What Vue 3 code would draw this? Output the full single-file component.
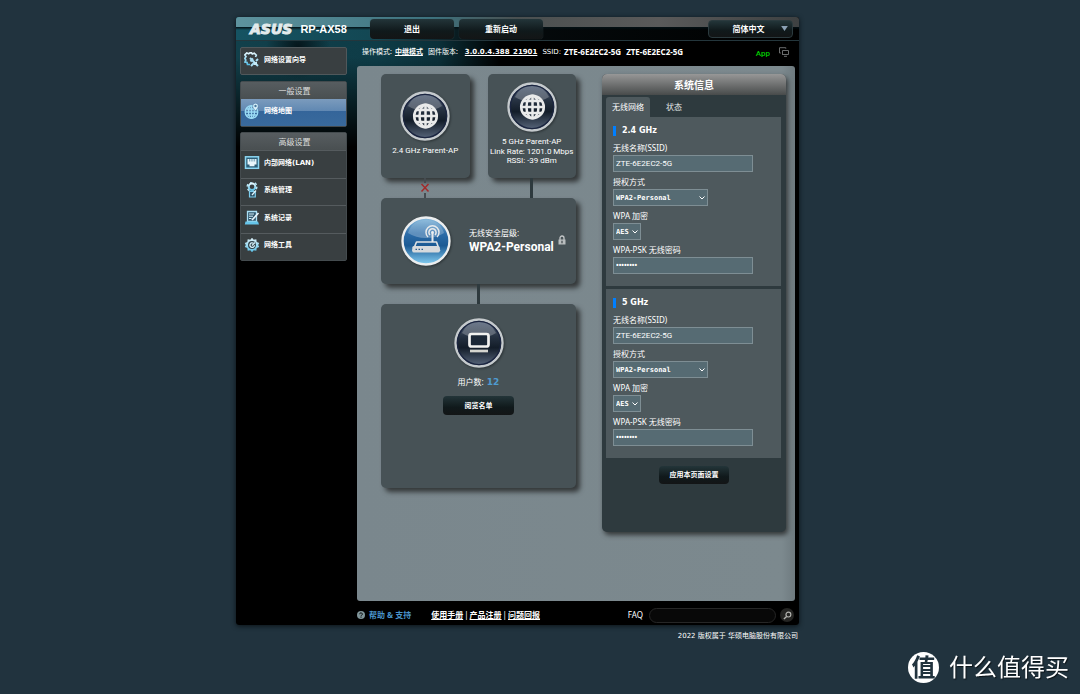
<script setup>
import { ref } from 'vue'

const language = ref('简体中文')
const search = ref('')
const advanced = [
  { label: '内部网络(LAN)', icon: 'i-lan' },
  { label: '系统管理', icon: 'i-admin' },
  { label: '系统记录', icon: 'i-log' },
  { label: '网络工具', icon: 'i-tool' },
]
const bands = ref([
  { id: 'b24', name: '2.4 GHz', ssid: 'ZTE-6E2EC2-5G', auth: 'WPA2-Personal', enc: 'AES', key: '12345678' },
  { id: 'b5', name: '5 GHz', ssid: 'ZTE-6E2EC2-5G', auth: 'WPA2-Personal', enc: 'AES', key: '12345678' },
])
</script>

<template>
  <svg class="defs" width="0" height="0" aria-hidden="true">
    <defs>
      <linearGradient id="g-dark" x1="0" y1="0" x2="0" y2="1">
        <stop offset="0" stop-color="#66748a" /><stop offset=".35" stop-color="#273343" />
        <stop offset=".6" stop-color="#131d29" /><stop offset="1" stop-color="#5c6a80" />
      </linearGradient>
      <linearGradient id="g-blue" x1="0" y1="0" x2="0" y2="1">
        <stop offset="0" stop-color="#8fc0e0" /><stop offset=".35" stop-color="#2c6ca8" />
        <stop offset=".6" stop-color="#1b5a94" /><stop offset="1" stop-color="#86d0f4" />
      </linearGradient>
      <linearGradient id="g-icon" x1="0" y1="0" x2="0" y2="1">
        <stop offset="0" stop-color="#e2f5fc" /><stop offset="1" stop-color="#59bfe6" />
      </linearGradient>
      <linearGradient id="g-gloss" x1="0" y1="0" x2="0" y2="1">
        <stop offset="0" stop-color="#fff" stop-opacity=".1" /><stop offset="1" stop-color="#fff" stop-opacity=".28" />
      </linearGradient>
      <symbol id="ring-dark" viewBox="0 0 50 50">
        <circle cx="25" cy="25" r="23.5" fill="url(#g-dark)" stroke="#c5cacd" stroke-width="2.4" />
        <circle cx="25" cy="25" r="21.6" fill="none" stroke="#1b2540" stroke-width="1.2" />
        <path d="M8 15Q13 4 25 4T42 15Q34 20 25 20T8 15Z" fill="url(#g-gloss)" />
      </symbol>
      <symbol id="globe" viewBox="0 0 50 50">
        <use href="#ring-dark" />
        <g fill="none" stroke="#e9eaea" stroke-width="2.5">
          <circle cx="25.5" cy="25" r="11.3" /><ellipse cx="25.5" cy="25" rx="6" ry="11.3" />
          <path d="M25.5 13.500v23M14 25h23M16 19h19M16 31h19" />
        </g>
      </symbol>
      <symbol id="i-wizard" viewBox="0 0 16 16">
        <path d="M6 12.500H3.500L3 10.500 1 10l.8-2L.8 6.500 2 4.500.8 3l2-2 1.900.8L6 .8h1.500l.8 1.200 2-.8 2 2-.8 1.800" fill="none" stroke="url(#g-icon)" stroke-width="1.700" />
        <path d="m6 6 8 8M7 14l3-3M12 9l2-2M9 6.500 6.500 9.500" fill="none" stroke="#a9def3" stroke-width="2" />
        <path d="M10 10h3v3h-3z" fill="#c6eaf7" />
      </symbol>
      <symbol id="i-map" viewBox="0 0 16 16">
        <g fill="none" stroke="#9bdcf5" stroke-width="1.300">
          <circle cx="7.500" cy="9" r="6.300" /><ellipse cx="7.500" cy="9" rx="3" ry="6.200" /><path d="M7.500 3v12M1.500 9h12M2.500 6h8M2.500 12h10" />
        </g>
        <path d="M11.500 8C9.700 5.500 8.700 4.600 8.700 3a2.800 2.800 0 0 1 5.600 0c0 1.600-1 2.500-2.800 5Z" fill="#d9f2fb" stroke="#3d6d9e" stroke-width=".5" />
        <circle cx="11.500" cy="3" r="1.200" fill="#47779f" />
      </symbol>
      <symbol id="i-lan" viewBox="0 0 16 16">
        <rect x="1.500" y="1.800" width="13" height="11.500" fill="#2d5f78" stroke="#8cd6f2" stroke-width="1.500" />
        <path d="M3.500 4h9v5.500h-2v1.700h-5V9.500h-2Z" fill="#e9f6fb" />
        <path d="M5.500 4v2.500M7.200 4v2.500M8.900 4v2.500M10.600 4v2.500" stroke="#568ba4" stroke-width=".7" />
      </symbol>
      <symbol id="i-admin" viewBox="0 0 16 16">
        <circle cx="8" cy="4.800" r="3.300" fill="none" stroke="url(#g-icon)" stroke-width="2" />
        <circle cx="8" cy="4.800" r="4.800" fill="none" stroke="#b8e6f6" stroke-width="1.500" stroke-dasharray="2.500 2.500" />
        <path d="M5.500 9.500h5.800v5.500H5.500Z" fill="#2d5165" stroke="#7cccec" stroke-width="1.200" />
        <path d="m8 13 4-4.500" stroke="#e1f4fb" stroke-width="1.300" />
      </symbol>
      <symbol id="i-log" viewBox="0 0 16 16">
        <path d="M3.500 1.500h9v10h-9Z" fill="#31566b" stroke="#a9def3" stroke-width="1.300" />
        <path d="M5 4h5M5 6.200h4M5 8.500h2.500" stroke="#d3effa" stroke-width="1" />
        <path d="m8 10 6.500-7" stroke="#e9f6fb" stroke-width="1.700" />
        <path d="M1.500 11.500h12.500l1 3H.8Z" fill="#67c5ea" />
      </symbol>
      <symbol id="i-tool" viewBox="0 0 16 16">
        <path d="m8 .8 1.700 2 2.600-.6.400 2.700 2.500 1.200L14.200 8l1 1.900-2.500 1.200-.4 2.700-2.600-.6-1.700 2-1.700-2-2.600.6-.4-2.700L.8 9.900l1-1.900-1-1.900 2.500-1.200.4-2.700 2.600.6Z" fill="url(#g-icon)" />
        <circle cx="8" cy="8" r="4" fill="#30424a" />
        <path d="M9.500 6.200a2.300 2.300 0 1 0 1 2" fill="none" stroke="#d5f0fa" stroke-width="1.300" /><path d="m8 8.500 3-3" stroke="#d5f0fa" stroke-width="1.300" />
      </symbol>
    </defs>
  </svg>

  <div class="page">
    <div class="shell">
      <header class="top">
        <div class="brand"><span class="logo">ASUS</span><span class="model">RP-AX58</span></div>
        <button type="button" class="btn head-btn">退出</button>
        <button type="button" class="btn head-btn">重新启动</button>
        <div class="lang">
          <select v-model="language" class="btn" aria-label="语言"><option>简体中文</option></select>
          <svg viewBox="0 0 8 6"><path d="M0 0h8L4 6Z" fill="#8ba0b4" /></svg>
        </div>
      </header>

      <div class="body">
        <nav class="nav">
          <a href="#" class="item wizard"><svg class="ico"><use href="#i-wizard" /></svg>网络设置向导</a>
          <section class="group">
            <h2>一般设置</h2>
            <a href="#" class="item active"><svg class="ico"><use href="#i-map" /></svg>网络地图</a>
          </section>
          <section class="group">
            <h2>高级设置</h2>
            <div class="items">
              <a v-for="a in advanced" :key="a.label" href="#" class="item">
                <svg class="ico"><use :href="'#' + a.icon" /></svg>{{ a.label }}
              </a>
            </div>
          </section>
        </nav>

        <div class="main">
          <div class="status">
            <span>操作模式:</span><a href="#">中继模式</a>
            <span>固件版本:</span><a href="#" class="ver">3.0.0.4.388_21901</a>
            <span class="ssid">SSID:</span><b>ZTE-6E2EC2-5G</b><b>ZTE-6E2EC2-5G</b>
            <a href="#" class="app">App</a>
            <svg class="screens" viewBox="0 0 10 10"><path d="M3.500 8V3.500h6v4h-6M5 9.300h3M1.800 6H.5V.7h6.300v1" fill="none" stroke="#6b6d6e" /></svg>
          </div>

          <main class="board">
            <div class="map">
              <div class="aps">
                <section class="card ap">
                  <svg class="badge"><use href="#globe" /></svg>
                  <p>2.4 GHz Parent-AP</p>
                </section>
                <section class="card ap linked">
                  <svg class="badge"><use href="#globe" /></svg>
                  <p>5 GHz Parent-AP</p>
                  <p>Link Rate: 1201.0 Mbps<br />RSSI: -39 dBm</p>
                </section>
              </div>
              <div class="wires">
                <svg viewBox="0 0 10 20"><path d="M5 0v5M5 15v5" stroke="#454b50" stroke-width="2" /><path d="m1.500 6 7 7.500M8.500 6l-7 7.500" stroke="#a32a2a" stroke-width="1.500" /></svg>
                <i class="wire"></i>
              </div>
              <section class="card router">
                <svg class="badge" viewBox="0 0 50 50">
                  <circle cx="25" cy="25" r="23.500" fill="url(#g-blue)" stroke="#eceeef" stroke-width="2.400" />
                  <path d="M7 17Q11 4 25 4T43 17Q35 22 25 22T7 17Z" fill="url(#g-gloss)" />
                  <path d="M15.500 26h20l3 8.500H12Z" fill="none" stroke="#dfe2e4" stroke-width="1.600" stroke-linejoin="round" />
                  <rect x="11.300" y="30" width="27.400" height="6.500" rx="1.500" fill="#d6dadd" />
                  <path d="M14.500 33.300h1.500M17.500 33.300h1.500M20.500 33.300h1.500" stroke="#2a5d8c" stroke-width="1.200" />
                  <g fill="none" stroke="#e7eaec" stroke-width="1.500"><path d="M31.500 17v9" stroke-width="2" /><path d="M29 19a3.600 3.600 0 1 1 5 0M27 21a6.500 6.500 0 1 1 9 0" /></g>
                  <circle cx="31.500" cy="16.500" r="1.400" fill="#eef0f1" />
                </svg>
                <div class="level">
                  <p>无线安全层级:</p>
                  <strong>WPA2-Personal</strong>
                </div>
                <svg class="lock" viewBox="0 0 8 10"><path d="M2 5V3a2 2 0 0 1 4 0v2" fill="none" stroke="#c4c7c8" stroke-width="1.300" /><path d="M.5 4.500h7V9.500h-7Z" fill="#b9bdbe" /><path d="M4 5.800v2.400" stroke="#3d4548" stroke-width="1.200" /></svg>
              </section>
              <i class="wire center"></i>
              <section class="card clients">
                <svg class="badge" viewBox="0 0 50 50">
                  <use href="#ring-dark" />
                  <rect x="15.500" y="16" width="19" height="12.500" rx="2" fill="#1b2736" stroke="#f1f1ef" stroke-width="2.700" />
                  <path d="M16 33h18" stroke="#d5d5cf" stroke-width="2.700" />
                </svg>
                <p>用户数: <b>12</b></p>
                <button type="button" class="btn">阅览名单</button>
              </section>
            </div>

            <aside class="info">
              <h1>系统信息</h1>
              <div class="tabs" role="tablist">
                <button type="button" role="tab" aria-selected="true" class="on">无线网络</button>
                <button type="button" role="tab" aria-selected="false">状态</button>
              </div>
              <form @submit.prevent>
                <fieldset v-for="b in bands" :key="b.id">
                  <h3>{{ b.name }}</h3>
                  <label :for="b.id + 's'">无线名称(SSID)</label>
                  <input :id="b.id + 's'" v-model="b.ssid" type="text" />
                  <label :for="b.id + 'a'">授权方式</label>
                  <div class="pick auth">
                    <select :id="b.id + 'a'" v-model="b.auth"><option>WPA2-Personal</option></select>
                    <svg viewBox="0 0 6 4"><path d="m.5.5 2.500 2.500L5.500.5" /></svg>
                  </div>
                  <label :for="b.id + 'e'">WPA 加密</label>
                  <div class="pick enc">
                    <select :id="b.id + 'e'" v-model="b.enc"><option>AES</option></select>
                    <svg viewBox="0 0 6 4"><path d="m.5.5 2.500 2.500L5.500.5" /></svg>
                  </div>
                  <label :for="b.id + 'k'">WPA-PSK 无线密码</label>
                  <input :id="b.id + 'k'" v-model="b.key" type="password" />
                </fieldset>
                <button type="submit" class="btn apply">应用本页面设置</button>
              </form>
            </aside>
          </main>

          <footer class="foot">
            <svg class="help" viewBox="0 0 8 8"><circle cx="4" cy="4" r="4" fill="#7f9499" /><path d="M2.700 3.200a1.300 1.300 0 1 1 1.900 1.100q-.6.300-.6.900M4 5.700v1" fill="none" stroke="#06090a" /></svg>
            <span class="support">帮助 &amp; 支持</span>
            <span class="links"><a href="#">使用手册</a>|<a href="#">产品注册</a>|<a href="#">问题回报</a></span>
            <label for="faq">FAQ</label>
            <input id="faq" v-model="search" type="text" />
            <button type="button" aria-label="搜索"><svg viewBox="0 0 10 10"><circle cx="6" cy="4" r="2.700" fill="none" stroke="#b4b4b0" stroke-width="1.300" /><path d="M4 6 1 9" stroke="#b4b4b0" stroke-width="1.500" /></svg></button>
          </footer>
        </div>
      </div>
    </div>
    <p class="copy">2022 版权属于 华硕电脑股份有限公司</p>
  </div>

  <div class="mark"><span>值</span>什么值得买</div>
</template>

<style>
body { background: #21333e; }
</style>

<style scoped>
.defs { position: absolute; }
.page, .mark { font-family: "Noto Sans", "Noto Sans CJK SC", sans-serif; }
.page { max-width: 563px; margin: 0 auto; padding: 17px 45px 0 0; font-size: 7px; line-height: 10px; color: #fff; }
.page * { box-sizing: border-box; }
p, h1, h2, h3 { margin: 0; }
a { color: inherit; text-decoration: none; }
button, input, select { font: inherit; color: inherit; margin: 0; border: 0; padding: 0; }
button { cursor: pointer; }
.shell {
  border-radius: 3px; overflow: hidden; box-shadow: 0 1px 5px #0a1216;
  background:
    radial-gradient(circle at 62px 30px, #05151a, transparent 32px),
    linear-gradient(to bottom, transparent 40px, #000 130px),
    linear-gradient(to right, #12404b, #0e3c47 25%, #0b3039 36%, #000 47%);
}
.top {
  display: flex; align-items: center; gap: 5px; height: 24px; padding-right: 6px;
  border-bottom: 1px solid #24363c;
  background:
    linear-gradient(to bottom, transparent 10px, #031014 10px, transparent 13px),
    linear-gradient(to right, #5e939e, #3d737f 35%, #4b5050 50%, #5a5a5a 75%, #3e4142) top / 100% 10px no-repeat,
    linear-gradient(to right, #155362, #134753 25%, #050b0d 45%, #000);
}
.brand { display: flex; align-items: center; flex: 0 0 129px; padding-left: 14px; gap: 8px; }
.logo { font: italic bold 14px/16px "DejaVu Sans", sans-serif; color: #e3ebec; -webkit-text-stroke: 1px #e3ebec; }
.model { font: bold 11px/16px "Liberation Sans", sans-serif; }
.btn {
  display: block; border-radius: 4px; font-weight: bold; text-align: center;
  background: linear-gradient(#233539, #10191b 60%, #131516);
}
.head-btn { width: 84px; height: 20px; font-size: 8px; box-shadow: 0 0 1px #42575c; }
.lang { margin-left: auto; position: relative; }
.lang select { appearance: none; width: 85px; height: 18px; padding-right: 4px; font-size: 8px; text-align-last: center; border: 1px solid #2b3a3e; }
.lang svg { position: absolute; right: 5px; top: 6px; width: 7px; height: 5px; pointer-events: none; }

.body { display: grid; grid-template-columns: 107px minmax(0, 1fr); gap: 10px; padding: 0 4px; }
.nav { padding-top: 6px; }
.item {
  display: flex; align-items: center; gap: 4px; padding: 0 0 3px 3px;
  font-family: "DejaVu Sans", "Noto Sans CJK SC", sans-serif;
  font-weight: bold; background: #393f41; border-top: 1px solid #555b5e;
}
.wizard { height: 28px; border: 1px solid #50585b; border-radius: 2px; }
.ico { width: 16px; height: 16px; flex: none; }
.group { margin-top: 6px; border: 1px solid #444b4e; border-radius: 2px; }
.group + .group { margin-top: 5px; }
.group h2 { height: 17px; font-size: 8px; line-height: 17px; font-weight: normal; text-align: center; color: #ddd; background: linear-gradient(#575d60, #494f51); padding-left: 2px; }
.item.active { background: linear-gradient(#7b9bbd, #6088b2 12px, #34659a 12px, #396a9c); border-top: 0; height: 27px; }
.items { display: grid; grid-auto-rows: 1fr; min-height: 110px; }

.status { display: flex; align-items: center; height: 25px; padding: 0 6px 3px 5px; white-space: nowrap; }
.status a { font-weight: bold; text-decoration: underline; margin: 0 5px 0 3px; }
.status b { font-size: 8px; margin-left: 2px; margin-right: 3px; }
.status .ver { font-family: "DejaVu Sans", sans-serif; margin-left: 7px; }
.status .ssid { font-family: "DejaVu Sans", sans-serif; margin-right: 1px; }
.status .app { margin: 0 9px 0 auto; font-family: Roboto, sans-serif; font-weight: 500; font-size: 8px; color: #0c0; text-decoration: none; padding-top: 3px; }
.screens { width: 10px; height: 10px; }

.board { display: grid; grid-template-columns: minmax(0, 195fr) minmax(0, 184fr); gap: 26px; align-items: start; min-height: 535px; padding: 8px 9px 20px 24px; background: linear-gradient(to right, #7a878d, #7c898e 97%, #6e7a7f); border-radius: 3px; }
.card { background: #475256; border-radius: 5px; box-shadow: 4px 4px 5px #343839; }
.aps { display: grid; grid-template-columns: 1fr 1fr; gap: 18px; }
.ap { display: flex; flex-direction: column; align-items: center; height: 104px; padding-top: 17px; font: 8px/10px Roboto, sans-serif; text-align: center; white-space: nowrap; }
.ap p { margin-top: 5px; }
.ap.linked { padding-top: 8px; }
.ap.linked p + p { margin-top: 0; line-height: 9px; }
.badge { width: 50px; height: 50px; flex: none; filter: drop-shadow(1px 1px 1px #2b3336); }
.wires { display: grid; grid-template-columns: 1fr 1fr; gap: 18px; height: 20px; justify-items: center; }
.wires svg { width: 10px; height: 20px; }
.wire { width: 3px; height: 20px; background: #2e3a3e; }
.wire.center { display: block; margin: 0 auto; }
.router { display: flex; align-items: center; height: 86px; padding-left: 20px; }
.level { margin-left: 18px; }
.level p { font-size: 8px; line-height: 12px; }
.level strong { display: block; font: bold 12px/16px Roboto, sans-serif; }
.lock { width: 8px; height: 10px; margin-left: 4px; margin-bottom: 2px; }
.clients { height: 184px; padding-top: 14px; display: flex; flex-direction: column; align-items: center; }
.clients p { margin: 8px 0; font-size: 8px; line-height: 12px; }
.clients p b { font: bold 9px/12px "DejaVu Sans", sans-serif; color: #4f9bd0; margin-left: 1px; }
.clients .btn { width: 71px; height: 19px; }

.info { height: 458px; background: #2e3a3e; border-radius: 5px; box-shadow: 2px 3px 5px #343839; }
.info h1 { height: 21px; font-size: 10px; line-height: 23px; text-align: center; border-radius: 5px 5px 0 0; background: linear-gradient(#979797, #484b4b); }
.tabs { display: flex; padding: 2px 4px 0; }
.tabs button { height: 20px; width: 48px; font-size: 8px; background: none; color: #e3e6e7; }
.tabs .on { width: 44px; background: #4e595d; border-radius: 3px 3px 0 0; color: #fff; }
fieldset { margin: 0 5px 3px 4px; border: 0; padding: 8px 28px 12px 7px; background: #4e595d; font-size: 8px; }
form fieldset:nth-of-type(2) { margin-bottom: 8px; }
h3 { font: bold 8px/12px "DejaVu Sans", sans-serif; margin-bottom: 4px; display: flex; align-items: center; }
h3::before { content: ""; width: 3px; height: 10px; background: #007fff; margin-right: 6px; }
label { display: block; }
fieldset label { line-height: 14px; }
fieldset input, fieldset select { display: block; width: 100%; height: 17px; padding: 0 2px; background: #566b73; border: 1px solid #7e8e94; border-radius: 0; }
fieldset input { margin-bottom: 3px; font: 8px Roboto, sans-serif; }
fieldset input:last-child { margin-bottom: 0; }
fieldset input[type="password"] { font: bold 7px "Noto Sans", sans-serif; }
.pick { position: relative; margin-bottom: 3px; }
.pick select { appearance: none; font: bold 7px "DejaVu Sans Mono", monospace; }
.pick svg { position: absolute; right: 3px; top: 7px; width: 6px; height: 4px; fill: none; stroke: #fff; pointer-events: none; }
.auth { width: 95px; }
.enc { width: 28px; }
.apply { width: 70px; height: 18px; margin: 0 auto; }

.foot { display: flex; align-items: center; height: 24px; padding: 4px 1px 0 0; white-space: nowrap; }
.help { width: 8px; height: 8px; margin-right: 4px; }
.support { color: #4a94cb; font-size: 8px; font-weight: bold; }
.links { display: flex; gap: 1px; margin-left: 20px; font-size: 8px; }
.links a { font-weight: bold; text-decoration: underline; }
.foot label { margin-left: auto; font-size: 8px; }
.foot input { width: 127px; height: 15px; margin: 0 4px 0 6px; padding: 0 6px; background: #080808; border: 1px solid #262626; border-radius: 8px; }
.foot button { width: 14px; height: 14px; border-radius: 50%; background: #252523; display: grid; place-items: center; }
.foot button svg { width: 9px; height: 9px; }
.copy { text-align: right; padding: 6px 1px 0 0; font-family: "DejaVu Sans", "Noto Sans CJK SC", sans-serif; }

.mark { position: fixed; right: 11px; bottom: 11px; display: flex; align-items: center; gap: 10px; color: #fff; font-size: 24px; line-height: 32px; text-shadow: 1px 1px 1px #0c1418; -webkit-font-smoothing: antialiased; }
.mark span { width: 31px; height: 31px; border-radius: 50%; background: #fff; color: #21333e; text-align: center; line-height: 29px; font-weight: bold; text-shadow: none; }
</style>
